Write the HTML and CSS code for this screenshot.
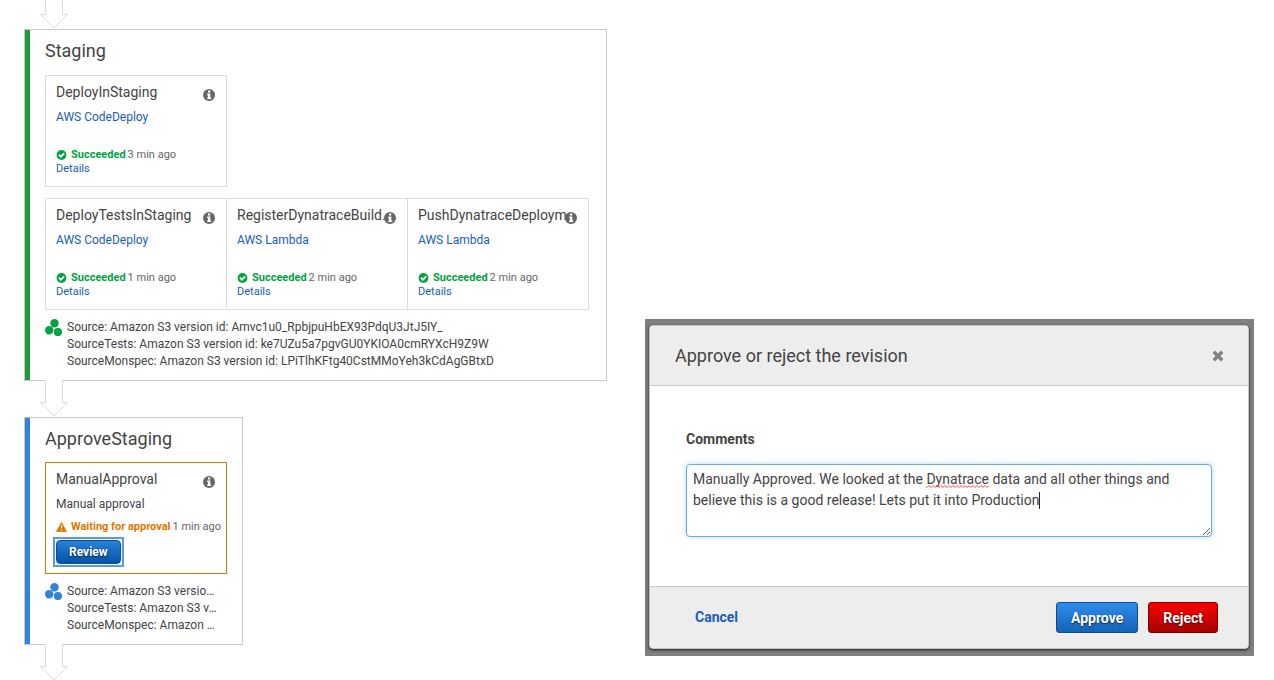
FILE: index.html
```html
<!DOCTYPE html>
<html lang="en">
<head>
<meta charset="utf-8">
<title>Pipeline</title>
<link rel="stylesheet" href="styles.css">
</head>
<body>
<svg class="defs" aria-hidden="true">
  <symbol id="arrow" viewBox="0 0 28 37">
    <path d="M5 0H23V23H28L14 37L0 23H5Z" fill="#fff"/>
    <path d="M5.500 0V22.500H0.500L14 36L27.500 22.500H22.500V0" fill="none" stroke="#dcdcdc"/>
  </symbol>
  <symbol id="info" viewBox="0 0 12 12">
    <circle cx="6" cy="6" r="6" fill="#666"/>
    <path d="M5 1.500H7.300V3.500H5ZM4.200 4.600H7.300V8.400H8.200V10H4.200V8.400H5V6.200H4.200Z" fill="#fff"/>
  </symbol>
  <symbol id="check" viewBox="0 0 10 10">
    <circle cx="5" cy="5" r="4.900" fill="#00a33f"/>
    <path d="M2.400 4.700L4.400 6.700L7.700 3.400" fill="none" stroke="#fff" stroke-width="1.700"/>
  </symbol>
  <symbol id="warning" viewBox="0 0 12 11">
    <path d="M6 0.500L11.600 10.500H0.400Z" fill="#e07700" stroke="#e07700" stroke-width="0.800" stroke-linejoin="round"/>
    <path d="M5.200 3.500H6.800L6.500 7H5.500ZM5.300 7.900H6.700V9.200H5.300Z" fill="#fff"/>
  </symbol>
  <symbol id="dots" viewBox="0 0 17 17">
    <circle cx="9.500" cy="4.300" r="4.200"/><circle cx="4.200" cy="11.300" r="4.200"/><circle cx="12.900" cy="13" r="4.100"/>
  </symbol>
</svg>

<div class="page">
  <main class="pipeline">
    <div class="connector connector-top"><svg class="arrow"><use href="#arrow"/></svg></div>

    <section class="stage stage-done stage-wide">
      <h2 class="stage-title">Staging</h2>
      <div class="actions">
        <article class="action">
          <h3 class="action-name">DeployInStaging</h3>
          <svg class="info"><use href="#info"/></svg>
          <a class="provider" href="#">AWS CodeDeploy</a>
          <p class="status"><svg class="status-icon"><use href="#check"/></svg><b>Succeeded</b> 3 min ago</p>
          <a class="details" href="#">Details</a>
        </article>
      </div>
      <div class="actions">
        <article class="action">
          <h3 class="action-name">DeployTestsInStaging</h3>
          <svg class="info"><use href="#info"/></svg>
          <a class="provider" href="#">AWS CodeDeploy</a>
          <p class="status"><svg class="status-icon"><use href="#check"/></svg><b>Succeeded</b> 1 min ago</p>
          <a class="details" href="#">Details</a>
        </article>
        <article class="action">
          <h3 class="action-name">RegisterDynatraceBuild…</h3>
          <svg class="info"><use href="#info"/></svg>
          <a class="provider" href="#">AWS Lambda</a>
          <p class="status"><svg class="status-icon"><use href="#check"/></svg><b>Succeeded</b> 2 min ago</p>
          <a class="details" href="#">Details</a>
        </article>
        <article class="action">
          <h3 class="action-name">PushDynatraceDeploym</h3>
          <svg class="info"><use href="#info"/></svg>
          <a class="provider" href="#">AWS Lambda</a>
          <p class="status"><svg class="status-icon"><use href="#check"/></svg><b>Succeeded</b> 2 min ago</p>
          <a class="details" href="#">Details</a>
        </article>
      </div>
      <div class="revisions">
        <svg class="dots"><use href="#dots"/></svg>
        <ul class="revision-list">
          <li>Source: Amazon S3 version id: Amvc1u0_RpbjpuHbEX93PdqU3JtJ5IY_</li>
          <li>SourceTests: Amazon S3 version id: ke7UZu5a7pgvGU0YKIOA0cmRYXcH9Z9W</li>
          <li>SourceMonspec: Amazon S3 version id: LPiTlhKFtg40CstMMoYeh3kCdAgGBtxD</li>
        </ul>
      </div>
    </section>

    <div class="connector"><svg class="arrow"><use href="#arrow"/></svg></div>

    <section class="stage stage-active">
      <h2 class="stage-title">ApproveStaging</h2>
      <div class="actions">
        <article class="action action-waiting">
          <h3 class="action-name">ManualApproval</h3>
          <svg class="info"><use href="#info"/></svg>
          <span class="provider">Manual approval</span>
          <p class="status"><svg class="status-icon"><use href="#warning"/></svg><b>Waiting for approval</b> 1 min ago</p>
          <div class="focus-ring"><button class="button button-review" type="button">Review</button></div>
        </article>
      </div>
      <div class="revisions">
        <svg class="dots"><use href="#dots"/></svg>
        <ul class="revision-list">
          <li>Source: Amazon S3 versio…</li>
          <li>SourceTests: Amazon S3 v…</li>
          <li>SourceMonspec: Amazon …</li>
        </ul>
      </div>
    </section>

    <div class="connector"><svg class="arrow"><use href="#arrow"/></svg></div>
  </main>

  <div class="backdrop">
    <form class="dialog" role="dialog" aria-labelledby="dialog-title">
      <header class="dialog-header">
        <h2 class="dialog-title" id="dialog-title">Approve or reject the revision</h2>
        <button class="close" type="button" aria-label="Close">
          <svg class="close-icon" viewBox="0 0 12 12"><path d="M1.800 1.800L10.200 10.200M10.200 1.800L1.800 10.200" stroke="#808080" stroke-width="3.400"/></svg>
        </button>
      </header>
      <div class="dialog-body">
        <label class="label" for="comments">Comments</label>
        <div class="field">
          <textarea class="comments" id="comments" spellcheck="false">Manually Approved. We looked at the Dynatrace data and all other things and believe this is a good release! Lets put it into Production</textarea>
          <svg class="squiggle" viewBox="0 0 63 3"><path d="M0 2L1 2.500L3 0.500L5 2.500L7 0.500L9 2.500L11 0.500L13 2.500L15 0.500L17 2.500L19 0.500L21 2.500L23 0.500L25 2.500L27 0.500L29 2.500L31 0.500L33 2.500L35 0.500L37 2.500L39 0.500L41 2.500L43 0.500L45 2.500L47 0.500L49 2.500L51 0.500L53 2.500L55 0.500L57 2.500L59 0.500L61 2.500L63 0.500" fill="none" stroke="#f33" stroke-width="0.900"/></svg>
          <span class="caret"></span>
        </div>
      </div>
      <footer class="dialog-footer">
        <a class="cancel" href="#">Cancel</a>
        <button class="button button-approve" type="button">Approve</button>
        <button class="button button-reject" type="button">Reject</button>
      </footer>
    </form>
  </div>
</div>
</body>
</html>
```
FILE: styles.css
```css
* {
  box-sizing: border-box;
}

body {
  margin: 0;
  overflow: hidden;
  background: #fff;
  color: #444;
  font: 12px/17px Roboto, "Liberation Sans", sans-serif;
}

h2, h3, p, ul {
  margin: 0;
  padding: 0;
  font-weight: 400;
}

a {
  color: #1a5dba;
  text-decoration: none;
}

button, textarea {
  font-family: inherit;
}

.defs {
  position: absolute;
  width: 0;
  height: 0;
}

.page {
  display: flex;
  align-items: flex-start;
  gap: 38px;
  padding: 0 20px 0 24px;
}

/* Pipeline */

.connector {
  display: flex;
  align-items: flex-end;
  position: relative;
  height: 37px;
  margin-top: -1px;
  padding-left: 16px;
}

.connector-top {
  height: 29px;
  margin-top: 0;
}

.arrow {
  flex: none;
  width: 28px;
  height: 37px;
}

.stage {
  width: fit-content;
  padding: 0 15px 10px 20px;
  border: 1px solid #c8c8c8;
}

.stage-wide {
  padding-right: 17px;
}

.stage-done {
  box-shadow: inset 5px 0 #1d9d38;
  fill: #00a33f;
}

.stage-active {
  box-shadow: inset 5px 0 #3184dd;
  fill: #3184dd;
}

.stage-title {
  padding: 9px 0 12px;
  font-size: 18px;
  line-height: 24px;
}

.stage-active .stage-title {
  padding-bottom: 11px;
}

.actions {
  display: flex;
}

.actions + .actions {
  margin-top: 11px;
}

.action {
  position: relative;
  display: flex;
  flex-direction: column;
  align-items: flex-start;
  width: 182px;
  height: 112px;
  padding: 6px 10px;
  border: 1px solid #dcdcdc;
}

.action + .action {
  margin-left: -1px;
}

.action-waiting {
  border-color: #e07700;
}

.action-name {
  font-size: 14px;
  line-height: 20px;
  white-space: nowrap;
}

.info {
  position: absolute;
  top: 13px;
  right: 11px;
  width: 12px;
  height: 12px;
}

.provider {
  margin-top: 7px;
  line-height: 17px;
}

.status {
  display: flex;
  align-items: center;
  gap: 2px;
  margin-top: 22px;
  color: #666;
  font-size: 11px;
  line-height: 14px;
  white-space: nowrap;
}

.status b {
  color: #00a33f;
}

.status-icon {
  width: 11px;
  height: 10px;
  margin-right: 2px;
}

.details {
  font-size: 11px;
  line-height: 14px;
}

.action-waiting .status {
  margin-top: 7px;
}

.action-waiting .status b {
  color: #e07700;
}

.revisions {
  display: flex;
  gap: 5px;
  padding-top: 9px;
}

.dots {
  flex: none;
  width: 17px;
  height: 17px;
}

.revision-list {
  list-style: none;
  white-space: nowrap;
}

/* Buttons */

.button {
  height: 31px;
  padding: 0 14px;
  border: 1px solid #0f4c8f;
  border-radius: 3px;
  color: #fff;
  font-size: 14px;
  font-weight: 700;
  text-shadow: 0 1px 2px rgba(0, 0, 0, 0.7);
}

.focus-ring {
  display: flex;
  margin: 3px 0 0 -3px;
  padding: 1px;
  border: 2px solid #569bdd;
}

.button-review {
  height: 24px;
  padding: 0 12px;
  border-radius: 4px;
  border-color: #0a4f9f;
  background: linear-gradient(#2a80d8, #0553a8);
  font-size: 12px;
}

.button-approve {
  background: linear-gradient(#2e8cec, #1464b8);
}

.button-reject {
  border-color: #7a0000;
  background: linear-gradient(#fa0000, #a80000);
}

/* Dialog */

.backdrop {
  flex: 1;
  margin-top: 319px;
  padding: 6px 5px 7px 4px;
  background: #808080;
}

.dialog {
  overflow: hidden;
  border: 1px solid #c4c4c4;
  border-radius: 4px;
  background: #fff;
  box-shadow: 0 1px 3px rgba(0, 0, 0, 0.8);
}

.dialog-header {
  display: flex;
  align-items: center;
  justify-content: space-between;
  height: 60px;
  padding: 0 24px 0 25px;
  border-bottom: 1px solid #c8c8c8;
  background: #ededed;
}

.dialog-title {
  font-size: 18px;
  line-height: 24px;
}

.close {
  display: flex;
  padding: 0;
  border: 0;
  background: none;
}

.close-icon {
  width: 12px;
  height: 12px;
}

.dialog-body {
  padding: 43px 36px 49px;
}

.label {
  display: block;
  font-size: 14px;
  font-weight: 700;
  line-height: 20px;
}

.field {
  position: relative;
  display: flex;
  margin-top: 15px;
}

.comments {
  flex: 1;
  height: 73px;
  padding: 4px 6px;
  border: 1px solid #66aee8;
  border-radius: 4px;
  outline: 0;
  box-shadow: 0 0 5px rgba(102, 174, 232, 0.5);
  color: #444;
  font-size: 14px;
  line-height: 21px;
  resize: both;
}

.squiggle {
  position: absolute;
  top: 21px;
  left: 240px;
  width: 63px;
  height: 3px;
}

.caret {
  position: absolute;
  top: 28px;
  left: 353px;
  width: 1px;
  height: 17px;
  background: #222;
}

.dialog-footer {
  display: flex;
  align-items: center;
  gap: 10px;
  height: 62px;
  padding: 0 30px 0 45px;
  border-top: 1px solid #c8c8c8;
  background: #ededed;
}

.cancel {
  margin-right: auto;
  font-size: 14px;
  font-weight: 700;
}
```
